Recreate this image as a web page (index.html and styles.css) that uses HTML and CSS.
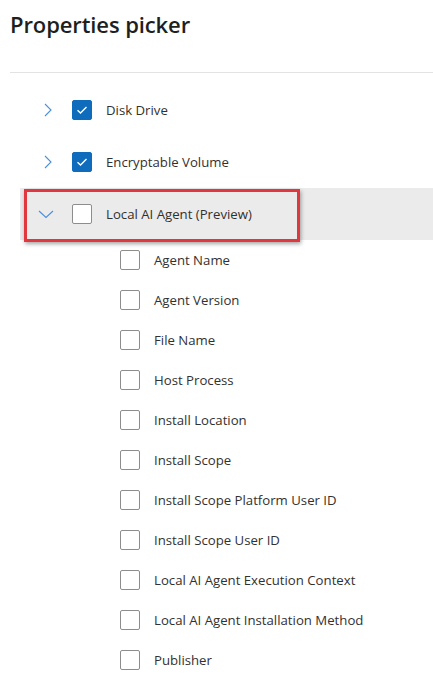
FILE: index.html
```html
<!DOCTYPE html>
<html lang="en">
<head>
    <meta charset="UTF-8">
    <meta name="viewport" content="width=device-width, initial-scale=1.0">
    <title>Properties picker</title>
    <link rel="stylesheet" href="styles.css">
</head>
<body>
    <div class="panel">
        <h1 class="title">Properties picker</h1>
        <div class="divider"></div>

        <div class="tree">
            <div class="node">
                <span class="chevron">
                    <svg width="10" height="14" viewBox="0 0 10 14"><path d="M2 1 L8 7 L2 13" fill="none" stroke="#4a90d9" stroke-width="1.1"/></svg>
                </span>
                <span class="box checked">
                    <svg width="12" height="10" viewBox="0 0 12 10"><path d="M1.5 5.2 L4.5 8 L10.5 2" fill="none" stroke="#fff" stroke-width="1.4"/></svg>
                </span>
                <span class="label">Disk Drive</span>
            </div>
            <div class="node">
                <span class="chevron">
                    <svg width="10" height="14" viewBox="0 0 10 14"><path d="M2 1 L8 7 L2 13" fill="none" stroke="#4a90d9" stroke-width="1.1"/></svg>
                </span>
                <span class="box checked">
                    <svg width="12" height="10" viewBox="0 0 12 10"><path d="M1.5 5.2 L4.5 8 L10.5 2" fill="none" stroke="#fff" stroke-width="1.4"/></svg>
                </span>
                <span class="label">Encryptable Volume</span>
            </div>
            <div class="node open">
                <span class="chevron">
                    <svg width="16" height="10" viewBox="0 0 16 10"><path d="M1 2 L8 8.5 L15 2" fill="none" stroke="#4a90d9" stroke-width="1.1"/></svg>
                </span>
                <span class="box"></span>
                <span class="label">Local AI Agent (Preview)</span>
                <div class="callout"></div>
            </div>

            <div class="children">
                <div class="leaf"><span class="box"></span><span class="label">Agent Name</span></div>
                <div class="leaf"><span class="box"></span><span class="label">Agent Version</span></div>
                <div class="leaf"><span class="box"></span><span class="label">File Name</span></div>
                <div class="leaf"><span class="box"></span><span class="label">Host Process</span></div>
                <div class="leaf"><span class="box"></span><span class="label">Install Location</span></div>
                <div class="leaf"><span class="box"></span><span class="label">Install Scope</span></div>
                <div class="leaf"><span class="box"></span><span class="label">Install Scope Platform User ID</span></div>
                <div class="leaf"><span class="box"></span><span class="label">Install Scope User ID</span></div>
                <div class="leaf"><span class="box"></span><span class="label">Local AI Agent Execution Context</span></div>
                <div class="leaf"><span class="box"></span><span class="label">Local AI Agent Installation Method</span></div>
                <div class="leaf"><span class="box"></span><span class="label">Publisher</span></div>
            </div>
        </div>
    </div>
</body>
</html>
```

FILE: styles.css
```css
body {
    font-family: "Open Sans", "Noto Sans", sans-serif;
    margin: 0;
    padding: 0;
    background-color: #ffffff;
    color: #323130;
}
.panel {
    padding-left: 10px;
    overflow: hidden;
}
.title {
    font-size: 22px;
    font-weight: 600;
    color: #201f1e;
    margin: 0;
    padding-top: 9px;
    height: 63px;
    line-height: 30px;
    letter-spacing: -0.1px;
}
.divider {
    height: 1px;
    background-color: #e3e3e3;
}
.tree {
    padding-top: 11px;
    margin-left: 10px;
}
.node {
    position: relative;
    display: flex;
    align-items: center;
    height: 52px;
    padding-left: 22px;
}
.node.open {
    background-color: #ebebeb;
}
.chevron {
    width: 30px;
    display: flex;
    align-items: center;
}
.node .chevron svg {
    margin-left: 1px;
}
.node.open .chevron svg {
    margin-left: -4px;
}
.box {
    width: 20px;
    height: 20px;
    box-sizing: border-box;
    border: 1px solid #8f8d8b;
    border-radius: 2px;
    background: #fff;
    display: flex;
    align-items: center;
    justify-content: center;
    flex-shrink: 0;
}
.box.checked {
    background-color: #0f6cbd;
    border-color: #0f6cbd;
}
.label {
    font-size: 13.2px;
    margin-left: 14px;
    white-space: nowrap;
}
.children {
    padding-left: 100px;
}
.leaf {
    display: flex;
    align-items: center;
    height: 40px;
}
.callout {
    position: absolute;
    left: 4px;
    top: 1px;
    width: 270px;
    height: 47px;
    border: 3px solid #e0383e;
    box-shadow: 1px 2px 4px rgba(0, 0, 0, 0.35);
}
```
